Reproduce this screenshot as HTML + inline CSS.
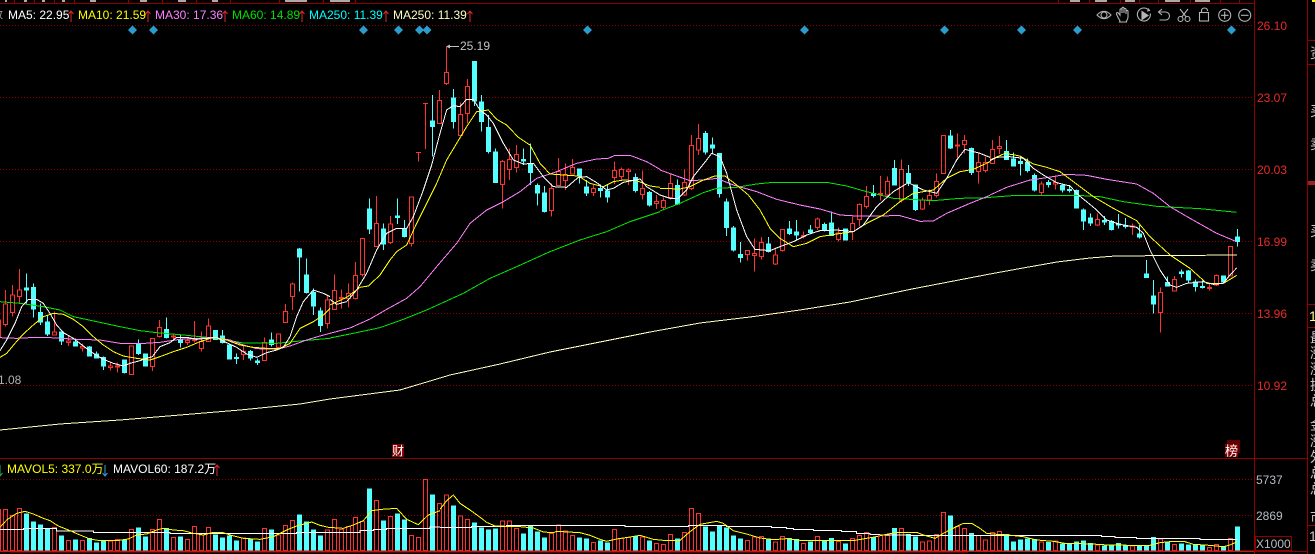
<!DOCTYPE html>
<html><head><meta charset="utf-8"><title>K</title>
<style>
html,body{margin:0;padding:0;background:#000;width:1315px;height:554px;overflow:hidden}
svg{display:block}
text{font-family:"Liberation Sans","Noto Sans CJK SC",sans-serif;font-size:12px}
.pr{fill:#e82a2a}.gy{fill:#b6bcc4}
.rw{fill:none;stroke:#ff3232}.rb{fill:#000;stroke:#ff3232}.cy{fill:#54ffff;stroke:#54ffff}
.l{fill:none;vector-effect:non-scaling-stroke;shape-rendering:crispEdges}
.w{stroke:#fff}.y{stroke:#ff0}.p{stroke:#ff80ff}.g{stroke:#00e600}
path,polyline{vector-effect:non-scaling-stroke}
.c path,.c polyline{shape-rendering:crispEdges}
.ic{fill:none;stroke:#b4b4b4;stroke-width:1.1}
.s{fill:#c8c8c8;font-size:14px}
</style></head><body>
<svg width="1315" height="554" viewBox="0 0 1315 554" xmlns="http://www.w3.org/2000/svg">
<rect width="1315" height="554" fill="#000"/>

<!-- frame -->
<g stroke="#900000" shape-rendering="crispEdges" fill="none">
<path d="M0 3.5H1254M1254.5 0V554M1307.5 0V554M0 458.5H1307M0 551.5H1307"/>
<path d="M14.5 0V3M34.5 0V3M54.5 0V3M74.5 0V3M128.5 0V3M162.5 0V3M196.5 0V3M230.5 0V3M279.5 0V3M323.5 0V3M355.5 0V3M1058.5 0V3M1089.5 0V3M1120.5 0V3M1139.5 0V3M1158.5 0V3M1190.5 0V3M1220.5 0V3M1239.5 0V3"/>
<path d="M1307 40.5H1315M1307 64.5H1315M1307 304.5H1315M1307 327.5H1315M1307 525.5H1315"/>
<path d="M10 552.5H968" stroke="#600000"/>
<rect x="1255.5" y="536.5" width="36" height="14"/>
</g>
<rect x="1308" y="181" width="7" height="4" fill="#a02020"/>
<rect x="1312" y="0" width="3" height="2" fill="#ff0"/>
<g fill="#aaa" shape-rendering="crispEdges"><rect x="5" y="0" width="2" height="2"/><rect x="24" y="0" width="3" height="2"/><rect x="42" y="0" width="3" height="2"/><rect x="62" y="0" width="3" height="2"/><rect x="90" y="0" width="6" height="2"/><rect x="140" y="0" width="7" height="2"/><rect x="178" y="0" width="8" height="2"/><rect x="212" y="0" width="6" height="2"/><rect x="285" y="0" width="22" height="2"/><rect x="330" y="0" width="20" height="2"/><rect x="1070" y="0" width="10" height="2"/><rect x="1095" y="0" width="12" height="2"/><rect x="1125" y="0" width="10" height="2"/><rect x="1165" y="0" width="15" height="2"/><rect x="1195" y="0" width="15" height="2"/></g>

<!-- grid -->
<g stroke="#900000" stroke-dasharray="1 2" shape-rendering="crispEdges">
<path d="M0 25.5H1254M0 97.5H1254M0 169.5H1254M0 241.5H1254M0 313.5H1254M0 385.5H1254M0 479.5H1254M0 515.5H1254"/>
</g>

<!-- right labels -->
<text x="1257" y="30" class="pr">26.10</text>
<text x="1257" y="102" class="pr">23.07</text>
<text x="1257" y="174" class="pr">20.03</text>
<text x="1257" y="246" class="pr">16.99</text>
<text x="1257" y="318" class="pr">13.96</text>
<text x="1257" y="390" class="pr">10.92</text>
<text x="1256" y="484" class="gy">5737</text>
<text x="1256" y="520" class="gy">2869</text>
<text x="1256" y="548" class="gy">X1000</text>

<!-- right column clipped -->
<g>
<text x="1310" y="58" class="s">资</text>
<text x="1310" y="116" class="s">买</text>
<text x="1310" y="149" class="s">卖</text>
<text x="1310" y="236" class="s">买</text>
<text x="1310" y="270" class="s">卖</text>
<text x="1309" y="321" fill="#ffff80" style="font-size:14px">1</text>
<text x="1310" y="343" class="s">最</text>
<text x="1310" y="358" class="s">涨</text>
<text x="1310" y="374" class="s">涨</text>
<text x="1310" y="390" class="s">换</text>
<text x="1310" y="406" class="s">总</text>
<text x="1310" y="430" class="s">金</text>
<text x="1310" y="446" class="s">涨</text>
<text x="1310" y="462" class="s">外</text>
<text x="1310" y="478" class="s">总</text>
<text x="1310" y="494" class="s">总</text>
<text x="1310" y="522" class="s">市</text>
<text x="1309" y="541" fill="#ccc" style="font-size:14px">1</text>
</g>

<!-- legend -->
<text x="-8" y="18" fill="#aaa" style="font-size:11px">数</text>
<text x="8" y="19" fill="#fff">MA5: 22.95</text>
<text x="78" y="19" fill="#ff0">MA10: 21.59</text>
<text x="155" y="19" fill="#ff80ff">MA30: 17.36</text>
<text x="232" y="19" fill="#00e000">MA60: 14.89</text>
<text x="309" y="19" fill="#00ffff">MA250: 11.39</text>
<text x="393" y="19" fill="#ffffc0">MA250: 11.39</text>
<path fill="none" stroke="#e02a2a" d="M71 11V22M68.500 14L71 11 73.500 14M148 11V22M145.500 14L148 11 150.500 14M225 11V22M222.500 14L225 11 227.500 14M302 11V22M299.500 14L302 11 304.500 14M386 11V22M383.500 14L386 11 388.500 14M470 11V22M467.500 14L470 11 472.500 14"/>

<!-- icons -->
<g class="ic">
<path d="M1097 15Q1104 7.500 1111 15Q1104 22.500 1097 15Z"/><circle cx="1104" cy="15" r="3"/>
<path d="M1120 21c-1-2-3-5-3.500-7-.3-1.500 1.300-1.800 2-.8l1.500 2V10c0-1.600 2-1.600 2 0v3-4.500c0-1.600 2-1.600 2 0V13v-3.500c0-1.500 2-1.500 2 0V14v-2.500c0-1.400 2-1.400 2 0V17c0 2-1 3-1.500 4v1h-7z"/>
<path d="M1149 10.500A6.500 6.500 0 1 0 1150.300 13.500"/><path d="M1142 11.500L1148 15.500 1142 19.500Z" fill="#b4b4b4"/><path d="M1148 8.500l1.500 2-2.500.5" />
<path d="M1162 9l-3.500 3 3.500 3M1158.500 12h7a4 4 0 0 1 0 8h-6"/>
<circle cx="1180.500" cy="19" r="2.500"/><circle cx="1187.500" cy="19" r="2.500"/><path d="M1181.800 17L1188 9M1186.200 17L1180 9"/>
<rect x="1199.500" y="12.500" width="9" height="8.500"/><path d="M1201.500 12.500V10.500a3 2.500 0 0 1 6 0V11"/>
<circle cx="1224.700" cy="15.300" r="6"/><path d="M1221 15.300h7.500M1224.700 11.500v7.500"/>
<circle cx="1244.700" cy="15.300" r="6"/><path d="M1241 15.300h7.500"/>
</g>

<!-- diamonds -->
<g fill="#2a9dcc">
<path d="M132.500 25.500l4.500 4.500-4.500 4.500-4.500-4.500z"/>
<path d="M153.500 25.500l4.500 4.500-4.500 4.500-4.500-4.500z"/>
<path d="M363.500 25.500l4.500 4.500-4.500 4.500-4.500-4.500z"/>
<path d="M398.500 25.500l4.500 4.500-4.500 4.500-4.500-4.500z"/>
<path d="M419.500 25.500l4.500 4.500-4.500 4.500-4.500-4.500z"/>
<path d="M427 25.500l4.500 4.500-4.500 4.500-4.500-4.500z"/>
<path d="M587.500 25.500l4.500 4.500-4.500 4.500-4.500-4.500z"/>
<path d="M804.500 25.500l4.500 4.500-4.500 4.500-4.500-4.500z"/>
<path d="M944.500 25.500l4.500 4.500-4.500 4.500-4.500-4.500z"/>
<path d="M1021.500 25.500l4.500 4.500-4.500 4.500-4.500-4.500z"/>
<path d="M1077.500 25.500l4.500 4.500-4.500 4.500-4.500-4.500z"/>
<path d="M1231.500 25.500l4.500 4.500-4.500 4.500-4.500-4.500z"/>
</g>

<!-- candles group 1 -->
<g class="c" transform="translate(0 260) scale(.33333)">
<path class="rw" d="M-5 180V232M16 90V200M37 75V170M58 27V130M163 155V225M205 228V258M247 250V275M331 305V332M352 308V338M394 258V345M457 235V333M478 180V232M520 220V240M562 232V255M583 183V248M604 215V275M625 175V245M730 255V300M793 232V302M835 222V265M856 132V188M877 67V150M982 105V205"/>
<path class="rb" d="M-11 180H1V232H-11ZM10 132H22V194H10ZM31 105H43V158H31ZM52 90H64V110H52ZM157 216H169V225H157ZM199 243H211V248H199ZM241 260H253V264H241ZM325 318H337V322H325ZM346 318H358V321H346ZM388 258H400V344H388ZM451 235H463V320H451ZM472 202H484V230H472ZM514 228H526V231H514ZM556 242H568V247H556ZM577 238H589V242H577ZM598 245H610V266H598ZM619 198H631V245H619ZM724 274H736V284H724ZM787 248H799V302H787ZM829 222H841V262H829ZM850 154H862V188H850ZM871 72H883V110H871ZM976 120H988V190H976Z"/>
<path class="cy" d="M79 40V130M73 84H85V90H73ZM100 70V172M94 82H106V147H94ZM121 130V195M115 158H127V186H115ZM142 165V228M136 186H148V222H136ZM184 215V255M178 216H190V243H178ZM226 235V258M220 246H232V258H220ZM268 258V290M262 261H274V288H262ZM289 275V295M283 282H295V294H283ZM310 290V330M304 293H316V318H304ZM373 300V340M367 300H379V338H367ZM415 238V285M409 250H421V280H409ZM436 280V318M430 282H442V318H430ZM499 172V235M493 208H505V232H493ZM541 225V262M535 238H547V248H535ZM646 210V240M640 212H652V238H640ZM667 210V250M661 228H673V248H661ZM688 255V297M682 255H694V297H682ZM709 280V312M703 293H715V296H703ZM751 270V302M745 275H757V294H745ZM772 295V315M766 303H778V307H766ZM814 217V260M808 240H820V254H808ZM898 -36V95M892 -33H904V-9H892ZM919 -5V100M913 45H925V98H913ZM940 85V165M934 98H946V138H934ZM961 142V216M955 153H967V197H955Z"/>
<polyline class="l g" points="0,125 60,130 130,140 180,150 220,170 290,185 360,200 420,212 470,218 550,225 620,232 680,240 730,249 830,250 910,242 990,235"/>
<polyline class="l p" points="0,233 50,235 110,232 150,233 230,238 300,240 360,250 420,251 480,247 540,238 580,236 640,232 690,240 730,255 770,266 830,268 870,258 920,240 960,228 990,220"/>
<polyline class="l y" points="0,292 20,280 45,250 70,222 100,195 130,170 160,160 190,163 220,178 250,200 280,230 310,255 340,275 370,288 410,295 450,300 480,290 520,275 560,262 600,245 640,232 680,240 720,255 760,262 800,265 840,265 870,250 900,205 940,185 970,165 990,145"/>
<polyline class="l w" points="0,272 20,240 45,190 65,140 85,118 110,118 130,130 150,160 170,195 190,218 220,235 250,258 280,280 310,298 340,310 370,318 390,310 420,302 440,295 457,290 480,260 510,248 530,232 560,232 590,238 620,235 650,233 680,248 710,262 740,282 770,292 800,278 830,270 850,262 870,230 890,170 910,125 940,90 970,100 990,110"/>
</g>

<!-- candles group 2 -->
<g class="c" transform="translate(330 60) scale(.33333)">
<path class="rw" d="M13 643V750M34 688V745M55 670V742M76 606V718M97 535V650M139 408V560M181 468V552M244 411V560M265 277V305M286 130V267M328 90V192M349 -39V75M391 128V228M412 57V190M517 300V446M538 265V360M559 255V338M664 370V470M685 294V378M706 310V390M727 297V343M790 375V408M853 305V372M874 322V360M895 325V375M937 332V418M979 405V447"/>
<path class="rb" d="M7 691H19V748H7ZM28 712H40V716H28ZM49 700H61V715H49ZM70 646H82V716H70ZM91 535H103V644H91ZM133 490H145V560H133ZM175 492H187V548H175ZM238 411H250V551H238ZM259 277H271V278H259ZM280 130H292V131H280ZM322 121H334V191H322ZM343 37H355V71H343ZM385 163H397V227H385ZM406 79H418V160H406ZM511 304H523V374H511ZM532 298H544V328H532ZM553 283H565V323H553ZM658 385H670V452H658ZM679 335H691V377H679ZM700 343H712V361H700ZM721 322H733V342H721ZM784 385H796V398H784ZM847 331H859V353H847ZM868 328H880V349H868ZM889 330H901V335H889ZM931 385H943V403H931ZM973 424H985V430H973Z"/>
<path class="cy" d="M118 415V522M112 447H124V507H112ZM160 490V570M154 507H166V552H154ZM202 415V492M196 468H208V473H196ZM223 480V532M217 505H229V530H217ZM307 105V290M301 183H313V200H301ZM370 87V205M364 114H376V185H364ZM433 5V138M427 5H439V123H427ZM454 105V215M448 126H460V185H448ZM475 165V280M469 202H481V275H469ZM496 265V368M490 276H502V368H490ZM580 265V315M574 298H586V303H574ZM601 250V375M595 311H607V338H595ZM622 370V437M616 376H628V399H616ZM643 378V458M637 399H649V454H637ZM748 327V370M742 327H754V348H742ZM769 360V408M763 381H775V399H763ZM811 373V412M805 385H817V392H805ZM832 375V428M826 393H838V411H826ZM916 340V398M910 352H922V392H910ZM958 393V440M952 397H964V435H952Z"/>
<polyline class="l g" points="0,834 60,822 150,803 220,778 290,750 400,700 480,655 560,620 660,575 750,540 830,515 900,485 990,455"/>
<polyline class="l p" points="0,820 60,804 120,777 170,748 230,715 270,680 320,620 380,550 420,490 470,450 520,425 570,395 620,355 680,335 740,310 800,297 835,295 855,286 900,286 950,305 990,328"/>
<polyline class="l y" points="0,735 50,712 90,682 115,678 150,645 180,600 200,575 230,555 260,490 290,430 320,370 350,300 380,250 410,200 440,155 475,150 500,178 530,195 565,232 600,255 630,310 660,342 700,345 745,348 780,370 820,380 850,365 880,360 920,362 960,378 990,382"/>
<polyline class="l w" points="0,718 20,733 50,725 80,690 110,640 140,570 170,520 200,505 230,505 250,470 280,390 305,315 330,220 350,150 370,137 390,140 410,118 430,118 450,150 470,165 490,190 520,250 550,300 580,312 610,310 640,350 670,380 710,382 745,352 770,350 800,368 830,390 850,385 880,367 930,357 950,380 990,405"/>
</g>

<!-- candles group 3 -->
<g class="c" transform="translate(660 110) scale(.33333)">
<path class="rw" d="M10 262V300M31 190V268M73 178V258M94 75V240M115 42V135M262 421V452M283 385V485M304 381V448M346 412V465M367 357V424M430 364V385M472 322V360M535 353V395M577 320V390M598 280V350M619 228V295M661 198V272M682 200V262M724 148V277M787 262V300M808 238V285M829 190V262M850 76V191M892 70V150M913 75V130M955 130V220M976 140V188"/>
<path class="rb" d="M4 271H16V293H4ZM25 220H37V262H25ZM67 217H79V255H67ZM88 107H100V235H88ZM109 85H121V120H109ZM256 421H268V433H256ZM277 430H289V437H277ZM298 397H310V440H298ZM340 435H352V462H340ZM361 358H373V421H361ZM424 376H436V379H424ZM466 327H478V353H466ZM529 369H541V389H529ZM571 340H583V365H571ZM592 283H604V328H592ZM613 259H625V290H613ZM655 250H667V253H655ZM676 214H688V255H676ZM718 178H730V270H718ZM781 270H793V297H781ZM802 256H814V270H802ZM823 214H835V257H823ZM844 76H856V191H844ZM886 105H898V108H886ZM907 91H919V104H907ZM949 157H961V185H949ZM970 157H982V182H970Z"/>
<path class="cy" d="M52 208V285M46 226H58V282H46ZM136 63V133M130 70H142V126H130ZM157 82V132M151 105H163V114H151ZM178 130V262M172 130H184V250H172ZM199 265V378M193 276H205V353H193ZM220 348V424M214 354H226V420H214ZM241 396V458M235 433H247V443H235ZM325 381V428M319 402H331V424H319ZM388 333V375M382 357H394V370H382ZM409 330V390M403 366H415V375H403ZM451 345V370M445 360H457V367H445ZM493 338V364M487 343H499V360H487ZM514 305V376M508 339H520V376H508ZM556 355V390M550 357H562V390H550ZM640 225V263M634 251H646V256H634ZM703 150V225M697 175H709V225H697ZM745 165V228M739 190H751V218H739ZM766 225V303M760 225H772V298H760ZM871 60V117M865 78H877V114H865ZM934 113V195M928 115H940V188H928Z"/>
<polyline class="l g" points="0,303 60,280 130,248 170,235 230,232 290,222 340,217 500,217 560,228 620,245 700,265 820,272 900,265 990,263"/>
<polyline class="l p" points="0,180 50,198 90,212 130,210 170,205 220,225 290,245 350,268 420,285 480,297 540,315 590,318 720,317 780,334 820,333 860,310 930,280 990,256"/>
<polyline class="l y" points="0,235 60,237 90,230 130,210 165,198 195,198 230,225 265,255 300,300 330,355 360,385 400,410 440,400 480,380 530,372 580,365 620,340 670,315 720,275 760,250 820,240 860,205 900,185 940,178 990,155"/>
<polyline class="l w" points="0,255 30,265 55,265 80,240 100,200 120,175 140,150 155,130 180,140 200,190 230,300 260,380 285,418 330,422 360,410 400,395 440,375 480,362 530,360 580,365 610,345 650,290 700,245 745,218 790,240 830,250 860,205 890,150 915,118 960,130 990,142"/>
</g>

<!-- candles group 4 -->
<g class="c" transform="translate(990 130) scale(.33333)">
<path class="rw" d="M7 30V102M28 18V72M154 155V195M196 140V178M322 250V288M427 280V315M511 472V608M553 438V485M658 460V482M679 433V468M721 348V440"/>
<path class="rb" d="M1 58H13V100H1ZM22 49H34V56H22ZM148 162H160V188H148ZM190 158H202V162H190ZM316 268H328V285H316ZM421 288H433V291H421ZM505 487H517V548H505ZM547 448H559V483H547ZM652 472H664V475H652ZM673 436H685V465H673ZM715 349H727V438H715Z"/>
<path class="cy" d="M49 30V90M43 65H55V88H43ZM70 68V108M64 87H76V108H64ZM91 80V137M85 95H97V101H85ZM112 85V128M106 97H118V122H106ZM133 130V185M127 136H139V180H127ZM175 150V172M169 158H181V164H169ZM217 160V187M211 167H223V180H211ZM238 165V187M232 178H244V181H232ZM259 178V234M253 181H265V234H253ZM280 235V300M274 240H286V273H274ZM301 250V288M295 264H307V279H295ZM343 258V285M337 272H349V276H337ZM364 270V302M358 275H370V299H358ZM385 252V295M379 282H391V285H379ZM406 264V295M400 286H412V289H400ZM448 285V325M442 312H454V321H442ZM469 390V443M463 432H475V443H463ZM490 450V550M484 498H496V522H484ZM532 440V470M526 458H538V468H526ZM574 418V442M568 426H580V431H568ZM595 420V458M589 423H601V450H589ZM616 448V485M610 456H622V470H610ZM637 452V475M631 469H643V472H631ZM700 437V458M694 438H706V456H694ZM742 297V350M736 321H748V335H736Z"/>
<polyline class="l g" points="0,202 80,196 260,196 330,200 400,215 500,229 630,236 740,247"/>
<polyline class="l p" points="0,195 50,172 120,150 170,143 230,133 290,136 350,148 440,162 490,190 540,230 600,265 680,310 740,335"/>
<polyline class="l y" points="0,90 45,70 90,78 130,102 170,112 210,125 250,155 310,200 370,235 440,272 480,320 540,375 600,415 650,460 700,460 740,436"/>
<polyline class="l w" points="0,92 20,82 60,80 100,85 130,115 160,135 200,158 240,168 265,195 290,215 320,240 350,270 390,283 440,292 460,310 480,360 510,420 540,465 560,472 590,460 640,455 670,463 700,460 720,435 740,414"/>
</g>

<!-- MA250 -->
<polyline class="l" stroke="#ffffc0" points="0,430 60,424 120,420 180,415 240,410 300,404 330,399 400,390 450,375 500,364 550,352 600,342 650,332 700,323 750,317 800,310 850,302 912,289 990,274 1023,268 1057,262 1090,258 1115,256 1237,255"/>

<!-- 25.19 / 1.08 -->
<path d="M447 46.500h12" stroke="#c0c0c0" shape-rendering="crispEdges"/><path d="M446 46.500l4-2v4z" fill="#c0c0c0"/>
<text x="460" y="50" fill="#c4c4c4">25.19</text>
<text x="-2" y="384" fill="#b0b0b0">1.08</text>

<!-- markers -->
<rect x="392" y="444" width="12" height="13" fill="#800000"/>
<text x="392" y="455" fill="#fff">财</text>
<rect x="1227" y="440" width="13" height="13" fill="#600000"/>
<rect x="1225" y="444" width="13" height="13" fill="#800000"/>
<text x="1225" y="455.500" fill="#fff" style="font-size:13px">榜</text>

<!-- volume legend -->
<text x="7" y="473" fill="#ff0">MAVOL5: 337.0万</text>
<text x="113" y="473" fill="#fff">MAVOL60: 187.2万</text>
<path fill="none" stroke="#38a0d8" d="M105 465V476M102.500 473L105 476 107.500 473"/>
<path fill="none" stroke="#30b050" d="M0 465V476M-2.500 473L0 476 2.500 473"/>
<path fill="none" stroke="#e02a2a" d="M217 465V476M214.500 468L217 465 219.500 468"/>

<!-- volume 1 -->
<g class="c" transform="translate(0 440) scale(.33333)">
<path class="rw" d="M-11 208h12V332h-12zM10 208h12V332h-12zM31 226h12V332h-12zM52 205h12V332h-12zM157 262h12V332h-12zM199 301h12V332h-12zM241 301h12V332h-12zM325 303h12V332h-12zM346 298h12V332h-12zM388 268h12V332h-12zM451 268h12V332h-12zM472 238h12V332h-12zM514 292h12V332h-12zM556 298h12V332h-12zM577 259h12V332h-12zM598 285h12V332h-12zM619 262h12V332h-12zM724 294h12V332h-12zM787 265h12V332h-12zM829 285h12V332h-12zM850 256h12V332h-12zM871 241h12V332h-12zM976 270h12V332h-12zM997 238h12V332h-12zM1018 268h12V332h-12zM1039 259h12V332h-12zM1060 232h12V332h-12zM1081 244h12V332h-12zM1123 181h12V332h-12zM1165 229h12V332h-12zM1228 286h12V332h-12zM1249 292h12V332h-12zM1270 118h12V332h-12zM1312 190h12V332h-12z"/>
<path class="cy" d="M73 222h12V332h-12zM94 246h12V332h-12zM115 255h12V332h-12zM136 265h12V332h-12zM178 288h12V332h-12zM220 300h12V332h-12zM262 295h12V332h-12zM283 309h12V332h-12zM304 303h12V332h-12zM367 300h12V332h-12zM409 264h12V332h-12zM430 291h12V332h-12zM493 265h12V332h-12zM535 291h12V332h-12zM640 285h12V332h-12zM661 294h12V332h-12zM682 288h12V332h-12zM703 303h12V332h-12zM745 298h12V332h-12zM766 306h12V332h-12zM808 270h12V332h-12zM892 225h12V332h-12zM913 246h12V332h-12zM934 270h12V332h-12zM955 288h12V332h-12zM1102 147h12V332h-12zM1144 243h12V332h-12zM1186 222h12V332h-12zM1207 240h12V332h-12zM1291 165h12V332h-12z"/>
<polyline class="l w" points="0,268 70,268 70,265 170,265 170,273 280,273 280,277 510,277 510,280 890,280 890,277 1080,277 1080,271 1120,271 1120,268 1160,268 1160,265 1290,265 1290,261 1320,261"/>
<polyline class="l y" points="0,262 20,240 50,220 75,214 100,222 130,235 150,242 175,258 210,272 240,285 270,297 300,302 350,302 385,297 410,285 440,282 470,270 490,265 520,270 550,272 580,280 610,285 635,278 670,278 690,285 730,295 780,298 820,290 860,270 890,258 935,246 960,256 985,262 1030,265 1060,255 1090,242 1115,212 1145,208 1190,205 1220,238 1255,254 1285,225 1320,212"/>
</g>

<!-- volume 2 -->
<g class="c" transform="translate(440 460) scale(.33333)">
<path class="rw" d="M13 105h12V272h-12zM55 168h12V272h-12zM76 178h12V272h-12zM181 183h12V272h-12zM202 183h12V272h-12zM223 205h12V272h-12zM328 220h12V272h-12zM349 195h12V272h-12zM370 213h12V272h-12zM391 226h12V272h-12zM454 247h12V272h-12zM517 208h12V272h-12zM538 235h12V272h-12zM559 232h12V272h-12zM601 231h12V272h-12zM643 250h12V272h-12zM664 253h12V272h-12zM685 223h12V272h-12zM727 217h12V272h-12zM748 145h12V272h-12zM769 160h12V272h-12zM916 241h12V272h-12zM937 231h12V272h-12zM958 229h12V272h-12zM1000 246h12V272h-12zM1021 229h12V272h-12zM1084 250h12V272h-12zM1126 229h12V272h-12zM1189 244h12V272h-12zM1231 235h12V272h-12zM1252 226h12V272h-12zM1273 217h12V272h-12z"/>
<path class="cy" d="M34 138h12V272h-12zM97 189h12V272h-12zM118 204h12V272h-12zM139 210h12V272h-12zM160 207h12V272h-12zM244 222h12V272h-12zM265 200h12V272h-12zM286 216h12V272h-12zM307 234h12V272h-12zM412 234h12V272h-12zM433 237h12V272h-12zM475 243h12V272h-12zM496 249h12V272h-12zM580 230h12V272h-12zM622 243h12V272h-12zM706 237h12V272h-12zM790 201h12V272h-12zM811 216h12V272h-12zM832 196h12V272h-12zM853 204h12V272h-12zM874 228h12V272h-12zM895 237h12V272h-12zM979 237h12V272h-12zM1042 235h12V272h-12zM1063 239h12V272h-12zM1105 246h12V272h-12zM1147 245h12V272h-12zM1168 235h12V272h-12zM1210 252h12V272h-12zM1294 233h12V272h-12z"/>
<polyline class="l w" points="0,202 95,202 95,200 200,200 200,196 555,196 555,200 745,200 745,196 860,196 860,200 995,200 995,203 1040,203 1040,206 1060,206 1060,208 1120,208 1120,211 1205,211 1205,214 1250,214 1250,220 1290,220 1290,223 1320,223"/>
<polyline class="l y" points="0,148 20,122 40,105 60,130 90,150 115,168 140,187 165,198 240,200 280,204 310,216 340,218 350,214 420,218 450,226 480,238 500,244 530,237 570,231 600,226 640,238 670,241 720,241 750,215 780,193 830,184 850,190 880,212 920,222 960,234 1000,239 1040,236 1080,241 1140,241 1160,241 1245,241 1280,235 1320,228"/>
</g>

<!-- volume 3 -->
<g class="c" transform="translate(880 440) scale(.33333)">
<path class="rw" d="M-5 287h12V332h-12zM16 287h12V332h-12zM58 265h12V332h-12zM121 306h12V332h-12zM142 303h12V332h-12zM163 283h12V332h-12zM184 217h12V332h-12zM226 259h12V332h-12zM247 265h12V332h-12zM289 287h12V332h-12zM310 300h12V332h-12zM331 277h12V332h-12zM352 274h12V332h-12zM478 306h12V332h-12zM520 303h12V332h-12zM646 315h12V332h-12zM751 318h12V332h-12zM835 297h12V332h-12zM877 313h12V332h-12zM982 322h12V332h-12zM1003 313h12V332h-12zM1045 295h12V332h-12z"/>
<path class="cy" d="M37 265h12V332h-12zM79 283h12V332h-12zM100 291h12V332h-12zM205 228h12V332h-12zM268 280h12V332h-12zM373 283h12V332h-12zM394 306h12V332h-12zM415 300h12V332h-12zM436 297h12V332h-12zM457 298h12V332h-12zM499 308h12V332h-12zM541 312h12V332h-12zM562 310h12V332h-12zM583 306h12V332h-12zM604 303h12V332h-12zM625 310h12V332h-12zM667 318h12V332h-12zM688 315h12V332h-12zM709 310h12V332h-12zM730 317h12V332h-12zM772 317h12V332h-12zM793 317h12V332h-12zM814 292h12V332h-12zM856 308h12V332h-12zM898 312h12V332h-12zM919 315h12V332h-12zM940 317h12V332h-12zM961 316h12V332h-12zM1024 320h12V332h-12zM1066 261h12V332h-12z"/>
<polyline class="l w" points="0,285 90,285 90,287 665,287 665,290 705,290 705,292 770,292 770,295 960,295 960,299 1072,299"/>
<polyline class="l y" points="0,287 50,277 110,277 130,285 165,295 190,280 225,262 250,250 275,250 300,265 320,280 350,283 385,285 430,290 470,300 520,304 555,310 640,312 660,314 750,316 810,316 840,308 880,304 915,305 940,313 975,315 1030,320 1050,315 1072,305"/>
</g>

<path d="M0 551H1254" stroke="#c01818" stroke-width="1.500" shape-rendering="crispEdges"/>
</svg>
</body></html>
